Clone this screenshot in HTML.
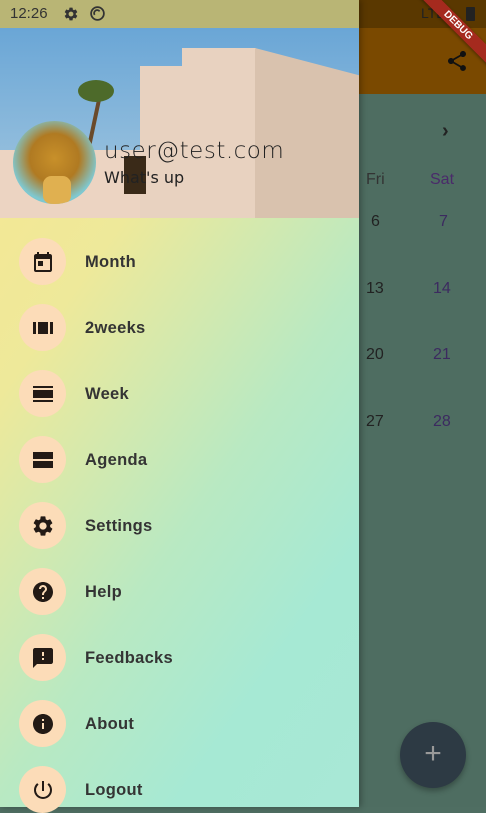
<!DOCTYPE html>
<html><head><meta charset="utf-8"><style>
*{margin:0;padding:0;box-sizing:border-box}
body{width:486px;height:807px;overflow:hidden;position:relative;font-family:"Liberation Sans",sans-serif;background:#4f6e62}
.bg{position:absolute;left:359px;top:0;right:0;bottom:0;background:#4e6d61}
.appbar{position:absolute;left:359px;top:28px;width:127px;height:66px;background:#7a4900}
.sbr{position:absolute;left:359px;top:0;width:127px;height:28px;background:#5a3800}
.drawer{position:absolute;left:0;top:0;width:359px;height:807px;background:linear-gradient(125deg,#f9e690 0%,#eee99a 30%,#b9e9c2 60%,#a6e9d4 80%,#a8e8d6 100%);box-shadow:2px 0 6px rgba(0,0,0,.3)}
.sb{position:absolute;left:0;top:0;width:359px;height:28px;background:#b9b575;color:#333;font-size:15px}
.hdr{position:absolute;left:0;top:28px;width:359px;height:190px;background:linear-gradient(#6aa6d6,#8ebbdc 60%,#a8c4d8);overflow:hidden}
.item{position:absolute;left:19px;width:47px;height:47px;border-radius:50%;background:#fcdcb8;display:flex;align-items:center;justify-content:center}
.lbl{position:absolute;left:85px;font-weight:bold;font-size:16.5px;color:#343434;letter-spacing:.3px}
.txt{position:absolute;color:#222;font-size:16px}
</style></head><body>
<div class="bg"></div>
<div class="sbr"></div>
<div class="appbar"></div>
<svg style="position:absolute;left:445px;top:49px" width="24" height="24" viewBox="0 0 24 24"><path fill="#111" d="M18 16.08c-.76 0-1.440.3-1.96.77L8.91 12.7c.05-.23.09-.46.09-.7s-.04-.47-.09-.7l7.05-4.11c.54.5 1.25.81 2.04.81 1.66 0 3-1.34 3-3s-1.34-3-3-3-3 1.34-3 3c0 .24.04.47.09.7L8.04 9.81C7.5 9.31 6.79 9 6 9c-1.66 0-3 1.34-3 3s1.34 3 3 3c.79 0 1.5-.31 2.04-.81l7.12 4.16c-.05.21-.08.43-.08.65 0 1.61 1.31 2.92 2.92 2.92s2.920-1.31 2.92-2.92-1.31-2.92-2.92-2.92z"/></svg>
<div style="position:absolute;left:421px;top:5px;font-size:14px;color:#222">LTE</div>
<div style="position:absolute;left:466px;top:7px;width:9px;height:14px;background:#222;border-radius:1px"></div>
<div style="position:absolute;left:403px;top:19px;width:110px;height:13px;background:#a52a1e;transform:rotate(45deg);color:#fff;font-size:10px;font-weight:bold;text-align:center;line-height:13px;box-shadow:0 1px 3px rgba(0,0,0,.4)">DEBUG</div>
<div class="txt" style="left:442px;top:120px;font-size:20px;font-weight:bold">›</div>
<div class="txt" style="left:366px;top:171px;color:#333">Fri</div>
<div class="txt" style="left:430px;top:171px;color:#4a2a6a">Sat</div>
<div class="txt" style="left:371px;top:213px">6</div><div class="txt" style="left:439px;top:213px;color:#3c2a60">7</div>
<div class="txt" style="left:366px;top:280px">13</div><div class="txt" style="left:433px;top:280px;color:#3c2a60">14</div>
<div class="txt" style="left:366px;top:346px">20</div><div class="txt" style="left:433px;top:346px;color:#3c2a60">21</div>
<div class="txt" style="left:366px;top:413px">27</div><div class="txt" style="left:433px;top:413px;color:#3c2a60">28</div>
<div style="position:absolute;left:400px;top:722px;width:66px;height:66px;border-radius:50%;background:#2d3a44;box-shadow:0 3px 6px rgba(0,0,0,.3);color:#999;font-size:30px;text-align:center;line-height:64px">+</div>

<div class="drawer">
<div class="sb"><span style="position:absolute;left:10px;top:5px">12:26</span>
<svg style="position:absolute;left:63px;top:6px" width="16" height="16" viewBox="0 0 24 24"><path fill="#333" d="M19.14 12.94c.04-.3.06-.61.06-.94 0-.32-.02-.64-.07-.94l2.03-1.58a.49.49 0 0 0 .12-.61l-1.92-3.32a.488.488 0 0 0-.59-.22l-2.39.96c-.5-.38-1.03-.7-1.62-.94l-.36-2.54a.484.484 0 0 0-.48-.41h-3.84c-.24 0-.43.17-.47.41l-.36 2.54c-.59.24-1.13.57-1.62.94l-2.39-.96c-.22-.08-.47 0-.59.22L2.74 8.87c-.12.21-.08.47.12.61l2.03 1.58c-.05.3-.09.63-.09.94s.02.64.07.94l-2.03 1.58a.49.49 0 0 0-.12.61l1.92 3.32c.12.22.37.29.59.22l2.39-.96c.5.38 1.03.7 1.62.94l.36 2.54c.05.24.24.41.48.41h3.84c.24 0 .44-.17.47-.41l.36-2.54c.59-.24 1.13-.56 1.62-.94l2.39.96c.22.08.47 0 .59-.22l1.92-3.32c.12-.22.07-.47-.12-.61l-2.01-1.58zM12 15.6c-1.98 0-3.6-1.62-3.6-3.6s1.62-3.6 3.6-3.6 3.6 1.62 3.6 3.6-1.62 3.6-3.6 3.6z"/></svg>
<svg style="position:absolute;left:89px;top:5px" width="17" height="17" viewBox="0 0 24 24"><circle cx="12" cy="12" r="9" fill="none" stroke="#333" stroke-width="2.5"/><path d="M8 14a4 4 0 0 1 7-5" fill="none" stroke="#333" stroke-width="2.5"/></svg>
</div>
<div class="hdr">
<div style="position:absolute;left:140px;top:38px;width:120px;height:152px;background:#e8d2c0"></div>
<div style="position:absolute;left:182px;top:20px;width:74px;height:30px;background:#e8d2c0"></div>
<div style="position:absolute;left:255px;top:20px;width:104px;height:170px;background:#d9c2ae;clip-path:polygon(0 0,100% 16%,100% 100%,0 100%)"></div>
<div style="position:absolute;left:0;top:122px;width:140px;height:68px;background:#ecd4c2"></div>
<div style="position:absolute;left:124px;top:128px;width:22px;height:38px;background:#3a2a18"></div>
<div style="position:absolute;left:91px;top:60px;width:4px;height:80px;background:#6a4a2a;transform:rotate(12deg)"></div>
<div style="position:absolute;left:78px;top:52px;width:36px;height:22px;border-radius:50%;background:#4d6a2a"></div>
<div style="position:absolute;left:13px;top:93px;width:83px;height:83px;border-radius:50%;background:radial-gradient(circle at 50% 45%,#c8902a 0%,#b07a22 40%,#7fc8d0 70%,#6ac0c8 100%);overflow:hidden"><div style="position:absolute;left:30px;top:55px;width:28px;height:28px;background:#e0b050;border-radius:30%"></div></div>
<div style="position:absolute;left:104px;top:110px;font-size:23px;color:#222;font-family:'DejaVu Sans',sans-serif;font-weight:300;letter-spacing:.5px">user@test.com</div>
<div style="position:absolute;left:104px;top:140px;font-size:16px;color:#222;font-family:'DejaVu Sans',sans-serif">What's up</div>
</div>

<div class="item" style="top:238px"><svg width="24" height="24" viewBox="0 0 24 24"><path fill="#231a15" d="M19 4h-1V2h-2v2H8V2H6v2H5c-1.11 0-2 .9-2 2v14a2 2 0 0 0 2 2h14c1.1 0 2-.9 2-2V6c0-1.1-.9-2-2-2zm0 16H5V9h14v11zM7 11h5v5H7z"/></svg></div><div class="lbl" style="top:253px">Month</div>
<div class="item" style="top:304px"><svg width="24" height="24" viewBox="0 0 24 24"><path fill="#231a15" d="M2 6h3v12H2zM7 6h10v12H7zM19 6h3v12h-3z"/></svg></div><div class="lbl" style="top:319px">2weeks</div>
<div class="item" style="top:370px"><svg width="24" height="24" viewBox="0 0 24 24"><path fill="#231a15" d="M2 4h20v2H2zM2 8h20v8H2zM2 18h20v2H2z"/></svg></div><div class="lbl" style="top:385px">Week</div>
<div class="item" style="top:436px"><svg width="24" height="24" viewBox="0 0 24 24"><path fill="#231a15" d="M2 4h20v7H2zM2 13h20v7H2z"/></svg></div><div class="lbl" style="top:451px">Agenda</div>
<div class="item" style="top:502px"><svg width="24" height="24" viewBox="0 0 24 24"><path fill="#231a15" d="M19.14 12.94c.04-.3.06-.61.06-.94 0-.32-.02-.64-.07-.94l2.03-1.58a.49.49 0 0 0 .12-.61l-1.92-3.32a.488.488 0 0 0-.59-.22l-2.39.96c-.5-.38-1.03-.7-1.62-.94l-.36-2.54a.484.484 0 0 0-.48-.41h-3.84c-.24 0-.43.17-.47.41l-.36 2.54c-.59.24-1.13.57-1.62.94l-2.39-.96c-.22-.08-.47 0-.59.22L2.74 8.87c-.12.21-.08.47.12.61l2.03 1.58c-.05.3-.09.63-.09.94s.02.64.07.94l-2.03 1.58a.49.49 0 0 0-.12.61l1.92 3.32c.12.22.37.29.59.22l2.39-.96c.5.38 1.03.7 1.62.94l.36 2.54c.05.24.24.41.48.41h3.84c.24 0 .44-.17.47-.41l.36-2.54c.59-.24 1.13-.56 1.62-.94l2.39.96c.22.08.47 0 .59-.22l1.92-3.32c.12-.22.07-.47-.12-.61l-2.01-1.58zM12 15.6c-1.98 0-3.6-1.62-3.6-3.6s1.62-3.6 3.6-3.6 3.6 1.62 3.6 3.6-1.62 3.6-3.6 3.6z"/></svg></div><div class="lbl" style="top:517px">Settings</div>
<div class="item" style="top:568px"><svg width="24" height="24" viewBox="0 0 24 24"><path fill="#231a15" d="M12 2C6.48 2 2 6.48 2 12s4.48 10 10 10 10-4.48 10-10S17.52 2 12 2zm1 17h-2v-2h2v2zm2.07-7.75l-.9.92C13.45 12.9 13 13.5 13 15h-2v-.5c0-1.1.45-2.1 1.17-2.83l1.24-1.26c.37-.36.59-.86.59-1.41 0-1.1-.9-2-2-2s-2 .9-2 2H8c0-2.21 1.79-4 4-4s4 1.79 4 4c0 .88-.36 1.68-.93 2.25z"/></svg></div><div class="lbl" style="top:583px">Help</div>
<div class="item" style="top:634px"><svg width="24" height="24" viewBox="0 0 24 24"><path fill="#231a15" d="M20 2H4c-1.1 0-1.99.9-1.99 2L2 22l4-4h14c1.1 0 2-.9 2-2V4c0-1.1-.9-2-2-2zm-7 12h-2v-2h2v2zm0-4h-2V6h2v4z"/></svg></div><div class="lbl" style="top:649px">Feedbacks</div>
<div class="item" style="top:700px"><svg width="24" height="24" viewBox="0 0 24 24"><path fill="#231a15" d="M12 2C6.48 2 2 6.48 2 12s4.48 10 10 10 10-4.48 10-10S17.52 2 12 2zm1 15h-2v-6h2v6zm0-8h-2V7h2v2z"/></svg></div><div class="lbl" style="top:715px">About</div>
<div class="item" style="top:766px"><svg width="24" height="24" viewBox="0 0 24 24"><path fill="#231a15" d="M13 3h-2v10h2V3zm4.83 2.17l-1.42 1.420A6.92 6.92 0 0 1 19 12c0 3.870-3.13 7-7 7A6.995 6.995 0 0 1 7.58 6.58L6.17 5.17A8.932 8.932 0 0 0 3 12a9 9 0 0 0 18 0c0-2.740-1.23-5.180-3.17-6.830z"/></svg></div><div class="lbl" style="top:781px">Logout</div>
</div>
</body></html>
